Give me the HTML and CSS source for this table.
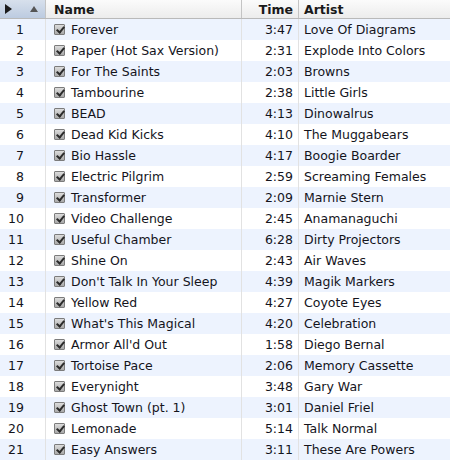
FILE: index.html
```html
<!DOCTYPE html>
<html lang="en">
<head>
    <meta charset="UTF-8">
    <title>Playlist</title>
    <link rel="stylesheet" href="styles.css">
</head>
<body>
    <div class="tracklist">
        <!-- HEADER -->
        <div class="row head">
            <div class="cell num sorted">
                <span class="play"></span>
                <span class="arrow"></span>
            </div>
            <div class="cell name">Name</div>
            <div class="cell time">Time</div>
            <div class="cell artist">Artist</div>
        </div>

        <!-- TRACKS -->
        <div class="row"><div class="cell num">1</div><div class="cell name"><span class="check"></span>Forever</div><div class="cell time">3:47</div><div class="cell artist">Love Of Diagrams</div></div>
        <div class="row"><div class="cell num">2</div><div class="cell name"><span class="check"></span>Paper (Hot Sax Version)</div><div class="cell time">2:31</div><div class="cell artist">Explode Into Colors</div></div>
        <div class="row"><div class="cell num">3</div><div class="cell name"><span class="check"></span>For The Saints</div><div class="cell time">2:03</div><div class="cell artist">Browns</div></div>
        <div class="row"><div class="cell num">4</div><div class="cell name"><span class="check"></span>Tambourine</div><div class="cell time">2:38</div><div class="cell artist">Little Girls</div></div>
        <div class="row"><div class="cell num">5</div><div class="cell name"><span class="check"></span>BEAD</div><div class="cell time">4:13</div><div class="cell artist">Dinowalrus</div></div>
        <div class="row"><div class="cell num">6</div><div class="cell name"><span class="check"></span>Dead Kid Kicks</div><div class="cell time">4:10</div><div class="cell artist">The Muggabears</div></div>
        <div class="row"><div class="cell num">7</div><div class="cell name"><span class="check"></span>Bio Hassle</div><div class="cell time">4:17</div><div class="cell artist">Boogie Boarder</div></div>
        <div class="row"><div class="cell num">8</div><div class="cell name"><span class="check"></span>Electric Pilgrim</div><div class="cell time">2:59</div><div class="cell artist">Screaming Females</div></div>
        <div class="row"><div class="cell num">9</div><div class="cell name"><span class="check"></span>Transformer</div><div class="cell time">2:09</div><div class="cell artist">Marnie Stern</div></div>
        <div class="row"><div class="cell num">10</div><div class="cell name"><span class="check"></span>Video Challenge</div><div class="cell time">2:45</div><div class="cell artist">Anamanaguchi</div></div>
        <div class="row"><div class="cell num">11</div><div class="cell name"><span class="check"></span>Useful Chamber</div><div class="cell time">6:28</div><div class="cell artist">Dirty Projectors</div></div>
        <div class="row"><div class="cell num">12</div><div class="cell name"><span class="check"></span>Shine On</div><div class="cell time">2:43</div><div class="cell artist">Air Waves</div></div>
        <div class="row"><div class="cell num">13</div><div class="cell name"><span class="check"></span>Don't Talk In Your Sleep</div><div class="cell time">4:39</div><div class="cell artist">Magik Markers</div></div>
        <div class="row"><div class="cell num">14</div><div class="cell name"><span class="check"></span>Yellow Red</div><div class="cell time">4:27</div><div class="cell artist">Coyote Eyes</div></div>
        <div class="row"><div class="cell num">15</div><div class="cell name"><span class="check"></span>What's This Magical</div><div class="cell time">4:20</div><div class="cell artist">Celebration</div></div>
        <div class="row"><div class="cell num">16</div><div class="cell name"><span class="check"></span>Armor All'd Out</div><div class="cell time">1:58</div><div class="cell artist">Diego Bernal</div></div>
        <div class="row"><div class="cell num">17</div><div class="cell name"><span class="check"></span>Tortoise Pace</div><div class="cell time">2:06</div><div class="cell artist">Memory Cassette</div></div>
        <div class="row"><div class="cell num">18</div><div class="cell name"><span class="check"></span>Everynight</div><div class="cell time">3:48</div><div class="cell artist">Gary War</div></div>
        <div class="row"><div class="cell num">19</div><div class="cell name"><span class="check"></span>Ghost Town (pt. 1)</div><div class="cell time">3:01</div><div class="cell artist">Daniel Friel</div></div>
        <div class="row"><div class="cell num">20</div><div class="cell name"><span class="check"></span>Lemonade</div><div class="cell time">5:14</div><div class="cell artist">Talk Normal</div></div>
        <div class="row"><div class="cell num">21</div><div class="cell name"><span class="check"></span>Easy Answers</div><div class="cell time">3:11</div><div class="cell artist">These Are Powers</div></div>
    </div>
</body>
</html>
```

FILE: styles.css
```css
/* Global */
* {
    margin: 0;
    padding: 0;
    box-sizing: border-box;
}

body {
    background-color: white;
    font-family: "DejaVu Sans", Verdana, sans-serif;
    font-size: 12.5px;
    color: #14141c;
}

.tracklist {
    width: 450px;
}

/* Rows: 4 columns */
.row {
    display: grid;
    grid-template-columns: 46px 196px 57px 1fr;
    height: 21px;
    align-items: stretch;
}

.row:nth-child(even) {
    background-color: #edf3fe;
}

.cell {
    display: flex;
    align-items: center;
    border-right: 1px solid #e2e2e2;
    white-space: nowrap;
    overflow: hidden;
}

.cell:last-child {
    border-right: none;
}

.num {
    justify-content: flex-end;
    padding-right: 21px;
}

.name {
    padding-left: 8px;
}

.time {
    justify-content: flex-end;
    padding-right: 5px;
}

.artist {
    padding-left: 5px;
}

/* Header */
.head {
    height: 19px;
    background: linear-gradient(#fbfbfb, #ececec);
    border-bottom: 1px solid #b9b9b9;
    font-weight: bold;
    color: #1a1a1a;
}

.head .cell {
    border-right: 1px solid #c4c4c4;
}

.head .cell:last-child {
    border-right: none;
}

.head .sorted {
    background: linear-gradient(#d7e0ec, #bccbe0);
    justify-content: flex-start;
    padding: 0;
}

/* play triangle and sort arrow */
.play {
    width: 0;
    height: 0;
    margin-left: 5px;
    border-top: 5px solid transparent;
    border-bottom: 5px solid transparent;
    border-left: 7px solid #1c1c1c;
}

.arrow {
    width: 0;
    height: 0;
    margin-left: 18px;
    border-left: 4px solid transparent;
    border-right: 4px solid transparent;
    border-bottom: 6px solid #555;
}

/* Checkbox */
.check {
    position: relative;
    width: 11px;
    height: 11px;
    margin-right: 6px;
    border: 1px solid #7c7c7c;
    border-radius: 1px;
    background: linear-gradient(#dcdcdc, #a9a9a9);
    flex-shrink: 0;
}

.check::after {
    content: "";
    position: absolute;
    left: 3px;
    top: 0px;
    width: 3px;
    height: 6px;
    border-right: 2px solid #2b2b2b;
    border-bottom: 2px solid #2b2b2b;
    transform: rotate(40deg);
}
```
